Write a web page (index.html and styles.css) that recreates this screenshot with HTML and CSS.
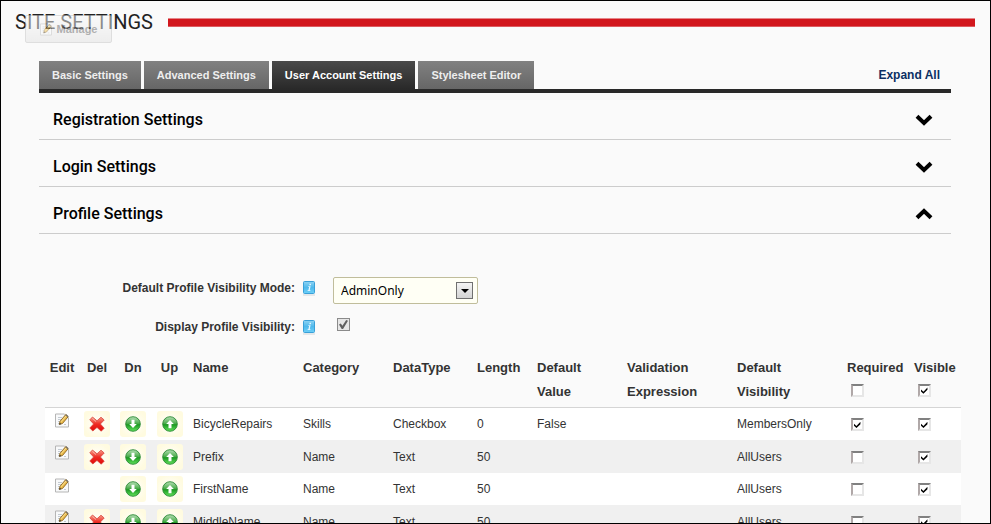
FILE: index.html
```html
<!DOCTYPE html>
<html lang="en">
<head>
<meta charset="utf-8">
<title>Site Settings</title>
<link rel="stylesheet" href="styles.css">
</head>
<body>
<svg class="sprite" aria-hidden="true">
  <defs>
    <linearGradient id="gRed" x1="0" y1="0" x2="0" y2="1"><stop offset="0" stop-color="#f7a08c"/><stop offset=".5" stop-color="#ee2a22"/><stop offset="1" stop-color="#e00a0a"/></linearGradient>
    <linearGradient id="gGreen" x1="0" y1="0" x2="0" y2="1"><stop offset="0" stop-color="#b5dfb5"/><stop offset=".45" stop-color="#4fae4f"/><stop offset=".55" stop-color="#1c9a22"/><stop offset="1" stop-color="#62e25c"/></linearGradient>
    <linearGradient id="gInfo" x1="0" y1="0" x2="0" y2="1"><stop offset="0" stop-color="#8ed3f3"/><stop offset=".5" stop-color="#4fb9ec"/><stop offset="1" stop-color="#6dd0f8"/></linearGradient>
    <symbol id="edit" viewBox="0 0 14 15">
      <path d="M.5 1h9l4 4v9H.5z" fill="#f8f9fa" stroke="#b5b5b5"/>
      <path d="M3 4.500h4M3 6.500h3M3 8.500h2M3 10.500h2M9 11.500h2" stroke="#c3cad1"/>
      <path d="M4.300 11.500l.8-3.300 5.700-6.700 2.400 2.200-5.700 6.800z" fill="#e9b949" stroke="#8a6422" stroke-width=".9"/>
      <path d="M6 8.800l5.300-6" stroke="#fbe39a"/>
      <path d="M4.300 11.800l.5-2 1.500 1.300z" fill="#3c3c3c"/>
      <path d="M10.800 1.700l2.300 2" stroke="#77716a" stroke-width="1.300"/>
    </symbol>
    <symbol id="del" viewBox="0 0 16 16">
      <path d="M3.500 1L8 4.800 12 1.200 15.200 4 11.400 8l3.800 4.200-3 3L8 11.400l-4.200 3.600L.8 12 4.600 8 .8 3.800z" fill="url(#gRed)" stroke="#d9453b" stroke-width=".8" stroke-linejoin="round"/>
      <path d="M3.500 2.400L7 5.600" stroke="#fbd0c4" stroke-opacity=".7" fill="none"/>
    </symbol>
    <symbol id="down" viewBox="0 0 16 16">
      <circle cx="8" cy="8" r="7.300" fill="url(#gGreen)" stroke="#2b8a34" stroke-width=".9"/>
      <path d="M6.500 3.800h3V8h2.300L8 12 4.200 8h2.300z" fill="#fff"/>
    </symbol>
    <symbol id="up" viewBox="0 0 16 16">
      <circle cx="8" cy="8" r="7.300" fill="url(#gGreen)" stroke="#2b8a34" stroke-width=".9"/>
      <path d="M6.500 12.200h3V8h2.300L8 4 4.200 8h2.300z" fill="#fff"/>
    </symbol>
    <symbol id="info" viewBox="0 0 14 15">
      <path d="M0 14h12" stroke="#cfd6da"/>
      <rect x=".5" y=".5" width="11" height="12" rx="1" fill="url(#gInfo)" stroke="#3aa0d8"/>
      <path d="M6.600 2.800h1.500l-.3 1.400H6.300zM5.300 5.200h2.300l-.9 4h.8l-.2.900H4.500l.2-.9h.7l.7-3.100h-.9z" fill="#e9f8ff"/>
    </symbol>
    <symbol id="chevron" viewBox="0 0 18 12">
      <path d="M2 2.200L9 9l7-6.800" fill="none" stroke="#000" stroke-width="4"/>
    </symbol>
  </defs>
</svg>
<div class="frame">
  <header class="title-bar">
    <h1>SITE SETTINGS</h1>
    <div class="rule"></div>
    <button class="manage" type="button"><svg width="12" height="13"><use href="#edit"/></svg>Manage</button>
  </header>
  <main>
    <nav class="tabs">
      <a href="#basic">Basic Settings</a>
      <a href="#advanced">Advanced Settings</a>
      <a href="#account" class="active">User Account Settings</a>
      <a href="#stylesheet">Stylesheet Editor</a>
      <a href="#expand" class="expand">Expand All</a>
    </nav>
    <h2><button type="button">Registration Settings<svg><use href="#chevron"/></svg></button></h2>
    <h2><button type="button">Login Settings<svg><use href="#chevron"/></svg></button></h2>
    <h2><button type="button">Profile Settings<svg class="open"><use href="#chevron"/></svg></button></h2>
    <form class="options">
      <label for="mode">Default Profile Visibility Mode:</label>
      <svg class="info"><use href="#info"/></svg>
      <div class="select">
        <select id="mode"><option>AdminOnly</option></select>
        <span class="arrow"></span>
      </div>
      <label for="display">Display Profile Visibility:</label>
      <svg class="info"><use href="#info"/></svg>
      <input class="muted" id="display" type="checkbox" checked disabled>
    </form>
  </main>
  <table>
    <colgroup><col class="c-edit"><col class="c-act"><col class="c-act"><col class="c-up"><col class="c-wide"><col class="c-mid"><col class="c-type"><col class="c-len"><col class="c-mid"><col class="c-wide"><col class="c-wide"><col class="c-req"><col class="c-vis"></colgroup>
    <thead>
      <tr>
        <th class="act">Edit</th><th class="act">Del</th><th class="act">Dn</th><th class="act">Up</th>
        <th>Name</th><th>Category</th><th>DataType</th><th>Length</th><th>Default<br>Value</th><th>Validation<br>Expression</th><th>Default<br>Visibility</th>
        <th><label for="allreq">Required</label><br><input id="allreq" type="checkbox"></th>
        <th><label for="allvis">Visible</label><br><input id="allvis" type="checkbox" checked></th>
      </tr>
    </thead>
    <tbody>
      <tr>
        <td class="act"><button class="edit" aria-label="Edit"><svg><use href="#edit"/></svg></button></td>
        <td class="act"><button class="icon" aria-label="Delete"><svg><use href="#del"/></svg></button></td>
        <td class="act"><button class="icon" aria-label="Move down"><svg><use href="#down"/></svg></button></td>
        <td class="act"><button class="icon" aria-label="Move up"><svg><use href="#up"/></svg></button></td>
        <td>BicycleRepairs</td><td>Skills</td><td>Checkbox</td><td>0</td><td>False</td><td></td><td>MembersOnly</td>
        <td><input type="checkbox" aria-label="Required" checked></td><td><input type="checkbox" aria-label="Visible" checked></td>
      </tr>
      <tr>
        <td class="act"><button class="edit" aria-label="Edit"><svg><use href="#edit"/></svg></button></td>
        <td class="act"><button class="icon" aria-label="Delete"><svg><use href="#del"/></svg></button></td>
        <td class="act"><button class="icon" aria-label="Move down"><svg><use href="#down"/></svg></button></td>
        <td class="act"><button class="icon" aria-label="Move up"><svg><use href="#up"/></svg></button></td>
        <td>Prefix</td><td>Name</td><td>Text</td><td>50</td><td></td><td></td><td>AllUsers</td>
        <td><input type="checkbox" aria-label="Required"></td><td><input type="checkbox" aria-label="Visible" checked></td>
      </tr>
      <tr>
        <td class="act"><button class="edit" aria-label="Edit"><svg><use href="#edit"/></svg></button></td>
        <td class="act"></td>
        <td class="act"><button class="icon" aria-label="Move down"><svg><use href="#down"/></svg></button></td>
        <td class="act"><button class="icon" aria-label="Move up"><svg><use href="#up"/></svg></button></td>
        <td>FirstName</td><td>Name</td><td>Text</td><td>50</td><td></td><td></td><td>AllUsers</td>
        <td><input type="checkbox" aria-label="Required"></td><td><input type="checkbox" aria-label="Visible" checked></td>
      </tr>
      <tr>
        <td class="act"><button class="edit" aria-label="Edit"><svg><use href="#edit"/></svg></button></td>
        <td class="act"><button class="icon" aria-label="Delete"><svg><use href="#del"/></svg></button></td>
        <td class="act"><button class="icon" aria-label="Move down"><svg><use href="#down"/></svg></button></td>
        <td class="act"><button class="icon" aria-label="Move up"><svg><use href="#up"/></svg></button></td>
        <td>MiddleName</td><td>Name</td><td>Text</td><td>50</td><td></td><td></td><td>AllUsers</td>
        <td><input type="checkbox" aria-label="Required"></td><td><input type="checkbox" aria-label="Visible" checked></td>
      </tr>
    </tbody>
  </table>
</div>
</body>
</html>
```
FILE: styles.css
```css
* { box-sizing: border-box; }
body {
  margin: 0;
  background: #fafafa;
  color: #333;
  font: 12px/24px "Liberation Sans", Arial, sans-serif;
}
.sprite { position: absolute; width: 0; height: 0; }
button { border: 0; padding: 0; margin: 0; background: none; font: inherit; color: inherit; }
svg { display: block; }

.frame {
  height: 100vh;
  overflow: hidden;
  border: 1px solid #000;
}

.title-bar {
  position: relative;
  display: flex;
  align-items: center;
  gap: 15px;
  height: 42px;
  padding: 0 15px 0 14px;
}
h1 {
  margin: 0;
  font: 400 20px/24px Roboto, sans-serif;
  color: #222;
}
.rule {
  flex: 1;
  height: 9px;
  background: #d2171d;
  border-top: 1px solid #e5868a;
  border-bottom: 1px solid #dd5b60;
}
.manage {
  position: absolute;
  left: 24px;
  top: 14px;
  width: 87px;
  height: 28px;
  display: flex;
  align-items: center;
  justify-content: center;
  gap: 5px;
  border: 1px solid #c4c4c4;
  border-radius: 2px;
  background: linear-gradient(#fafafa, #e2e2e2);
  font-size: 11px;
  font-weight: bold;
  color: #666;
  opacity: .5;
}

main { margin: 18px 39px 0 38px; }
.tabs {
  display: flex;
  gap: 3px;
  border-bottom: 4px solid #292929;
  font-size: 11px;
  font-weight: bold;
  line-height: 28px;
}
.tabs a {
  padding: 0 13px;
  background: linear-gradient(#818181, #666);
  color: #eee;
  text-decoration: none;
}
.tabs .active { background: linear-gradient(#4a4a4a, #292929); color: #fff; }
.tabs .expand {
  margin-left: auto;
  padding: 0 11px;
  background: none;
  color: #0b2f63;
  font-size: 12px;
}

h2 { margin: 0; border-bottom: 1px solid #ccc; }
h2 button {
  display: flex;
  align-items: center;
  justify-content: space-between;
  width: 100%;
  height: 46px;
  padding: 8px 18px 0 14px;
  font: 500 16px/24px Roboto, sans-serif;
  color: #000;
}
h2 svg { width: 18px; height: 12px; }
h2 .open { transform: scaleY(-1); }

.options {
  display: grid;
  grid-template-columns: 256px 14px 1fr;
  column-gap: 8px;
  row-gap: 12px;
  margin-top: 43px;
  font-weight: bold;
}
.options label { text-align: right; line-height: 22px; }
.info { width: 14px; height: 15px; margin-top: 4px; }
.select { position: relative; margin-left: 8px; width: 145px; }
select {
  appearance: none;
  display: block;
  width: 100%;
  height: 27px;
  padding: 0 7px;
  border: 1px solid #c0bd9b;
  border-radius: 2px;
  background: #fffff5;
  color: #000;
  font: 12px "Noto Sans", sans-serif;
}
.arrow {
  position: absolute;
  right: 5px;
  top: 5px;
  width: 17px;
  height: 17px;
  border: 1px solid #707070;
  background: linear-gradient(#f4f4f4, #d4d4d4);
  pointer-events: none;
}
.arrow::after {
  content: "";
  position: absolute;
  left: 4px;
  top: 6px;
  border: 4px solid transparent;
  border-top-color: #000;
  border-bottom: 0;
}

input[type="checkbox"] {
  appearance: none;
  display: inline-block;
  vertical-align: middle;
  width: 13px;
  height: 13px;
  margin: 0 4px;
  border: 2px solid;
  border-color: #808080 #e6e6e6 #e6e6e6 #b0a8a8;
  background: #fff;
}
input[type="checkbox"]:checked::before {
  content: "";
  display: block;
  width: 7px;
  height: 7px;
  margin: 1px;
  background: #000;
  clip-path: polygon(0 34%, 35% 66%, 92% 6%, 92% 40%, 35% 94%, 0 62%);
}
input.muted[type="checkbox"] { margin: 2px 12px; border: 1px solid #8a8a8a; background: #e6e6e6; }
input.muted[type="checkbox"]:checked::before {
  width: 9px;
  height: 9px;
  background: #606060;
  clip-path: polygon(0 50%, 20% 38%, 38% 65%, 80% 0, 100% 8%, 45% 100%, 30% 100%);
}

table {
  width: calc(100% - 73px);
  margin: 14px 29px 0 44px;
  table-layout: fixed;
  border-collapse: separate;
  border-spacing: 0;
}
.c-edit { width: 34px; }
.c-act { width: 36px; }
.c-up { width: 37px; }
.c-wide { width: 110px; }
.c-mid { width: 90px; }
.c-type { width: 84px; }
.c-len { width: 60px; }
.c-req { width: 67px; }
.c-vis { width: 52px; }
th {
  padding: 4px 0 3px 5px;
  border-bottom: 1px solid #d5d5d5;
  font-size: 13px;
  text-align: left;
  vertical-align: top;
}
th input[type="checkbox"] { margin-bottom: 4px; }
td { height: 32px; padding: 0 0 0 5px; background: #fff; }
tr:nth-child(even) td { height: 33px; background: #f0f0f0; }
th.act, td.act { padding-left: 0; padding-right: 0; text-align: center; }
td.act:first-child { vertical-align: top; }
.edit { display: block; margin: 5px auto 0; }
.edit svg { width: 14px; height: 15px; }
.icon {
  display: block;
  width: 26px;
  height: 26px;
  margin: 0 auto;
  padding: 5px;
  border-radius: 3px;
  background: radial-gradient(#fff, #fffbe0 75%);
}
.icon svg { width: 16px; height: 16px; }
```
